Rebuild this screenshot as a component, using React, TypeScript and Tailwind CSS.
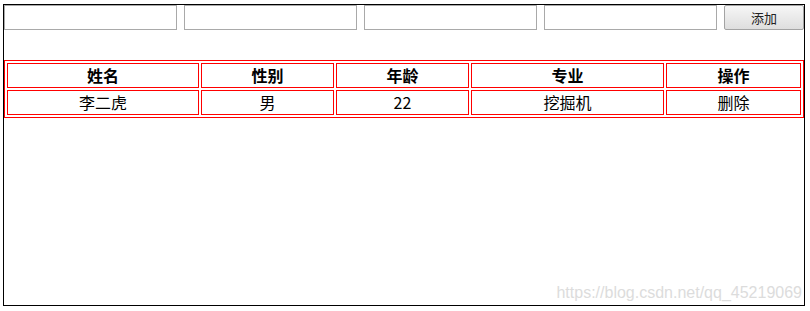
import React from "react";

type Student = {
  name: string;
  gender: string;
  age: number;
  major: string;
};

const students: Student[] = [
  { name: "李二虎", gender: "男", age: 22, major: "挖掘机" },
];

const cell = "border border-[#ff0000] h-[25px] p-0 text-center align-middle leading-[23px]";

export default function App() {
  return (
    <div className="pt-[4px] pl-[3px] bg-white" style={{ fontFamily: '"Noto Sans CJK SC", "Liberation Sans", sans-serif' }}>
      <div className="relative w-[802px] h-[302px] border border-black text-black">
        <div className="flex">
          <input className="w-[173px] h-[25px] border border-[#a9a9a9] outline-none" type="text" />
          <input className="ml-[7px] w-[173px] h-[25px] border border-[#a9a9a9] outline-none" type="text" />
          <input className="ml-[7px] w-[173px] h-[25px] border border-[#a9a9a9] outline-none" type="text" />
          <input className="ml-[7px] w-[173px] h-[25px] border border-[#a9a9a9] outline-none" type="text" />
          <button className="ml-[7px] w-[80px] h-[25px] border border-[#a3a3a3] rounded-[2px] bg-gradient-to-b from-[#f6f6f6] to-[#dedede] text-[13px] text-[#222]">
            添加
          </button>
        </div>
        <table className="mt-[30px] w-[800px] table-fixed border-separate border-spacing-[2px] border border-[#ff0000] text-[16px]">
          <colgroup>
            <col className="w-[192px]" />
            <col className="w-[133px]" />
            <col className="w-[133px]" />
            <col className="w-[193px]" />
            <col className="w-[135px]" />
          </colgroup>
          <thead>
            <tr>
              <th className={`${cell} font-bold`}>姓名</th>
              <th className={`${cell} font-bold`}>性别</th>
              <th className={`${cell} font-bold`}>年龄</th>
              <th className={`${cell} font-bold`}>专业</th>
              <th className={`${cell} font-bold`}>操作</th>
            </tr>
          </thead>
          <tbody>
            {students.map((s) => (
              <tr key={s.name}>
                <td className={cell}>{s.name}</td>
                <td className={cell}>{s.gender}</td>
                <td className={cell}>{s.age}</td>
                <td className={cell}>{s.major}</td>
                <td className={cell}>删除</td>
              </tr>
            ))}
          </tbody>
        </table>
        <span className="absolute right-[2px] bottom-[4px] text-[16px] leading-none text-[#dcdcdc] pointer-events-none" style={{ fontFamily: '"Liberation Sans", Arial, sans-serif' }}>
          https://blog.csdn.net/qq_45219069
        </span>
      </div>
    </div>
  );
}
